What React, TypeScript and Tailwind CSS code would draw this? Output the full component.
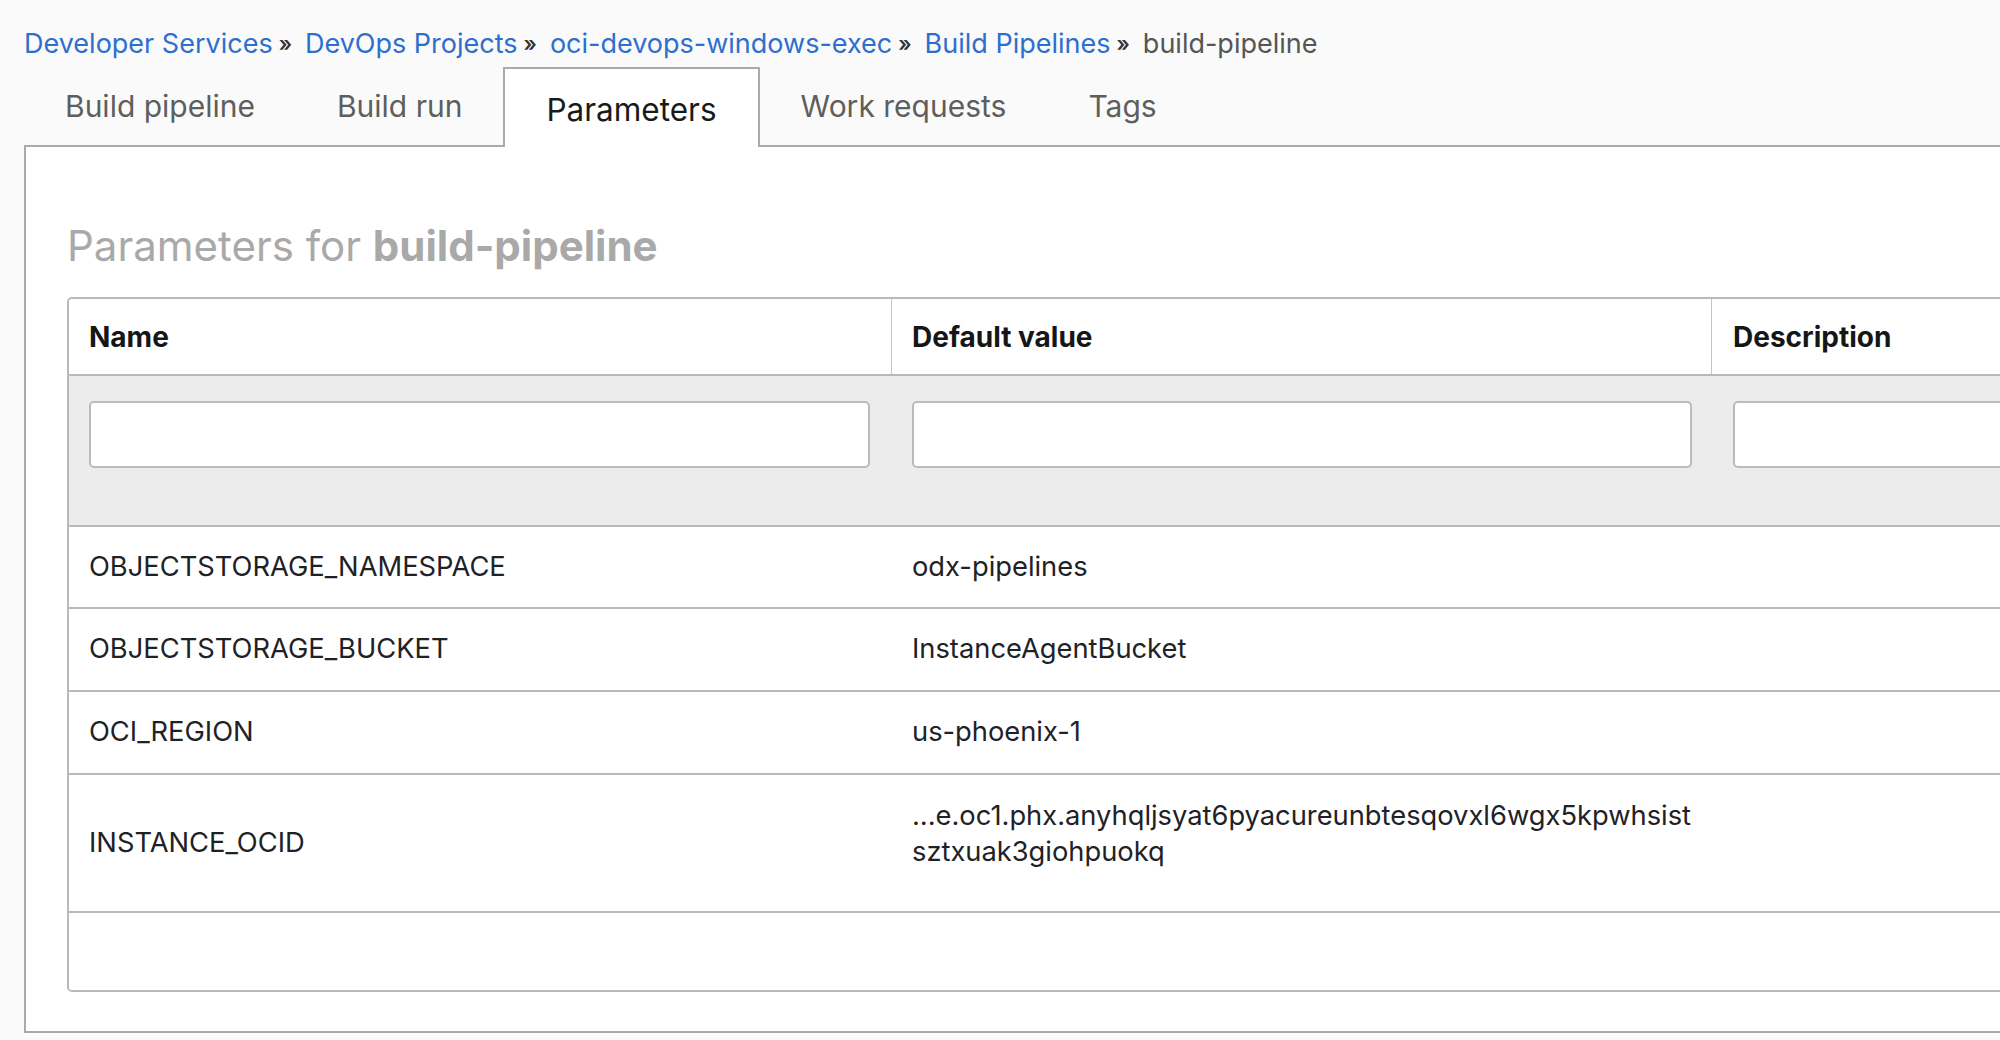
import React from "react";

const crumbs = [
  "Developer Services",
  "DevOps Projects",
  "oci-devops-windows-exec",
  "Build Pipelines",
];

const tabs = ["Build pipeline", "Build run", "Parameters", "Work requests", "Tags"];

const rows: { name: string; value: React.ReactNode; h: string }[] = [
  { name: "OBJECTSTORAGE_NAMESPACE", value: "odx-pipelines", h: "h-[82px]" },
  { name: "OBJECTSTORAGE_BUCKET", value: "InstanceAgentBucket", h: "h-[83px]" },
  { name: "OCI_REGION", value: "us-phoenix-1", h: "h-[83px]" },
  {
    name: "INSTANCE_OCID",
    value: (
      <div className="leading-[36px] -mt-[18px]">
        <div>...e.oc1.phx.anyhqljsyat6pyacureunbtesqovxl6wgx5kpwhsist</div>
        <div>sztxuak3giohpuokq</div>
      </div>
    ),
    h: "h-[138px]",
  },
];

export default function App() {
  return (
    <div
      className="w-[2000px] h-[1040px] overflow-hidden bg-[#fafafa]"
      style={{ fontFamily: "Inter, 'Noto Sans', Arial, sans-serif" }}
    >
      {/* Breadcrumb */}
      <div className="pt-[22px] h-[67px] pl-[24px] flex items-start text-[27px] leading-[44px] whitespace-nowrap">
        {crumbs.map((c) => (
          <React.Fragment key={c}>
            <span className="text-[#2d6fcd]">{c}</span>
            <span className="ml-[6px] mr-[13px] text-[#333] text-[21px] font-semibold">»</span>
          </React.Fragment>
        ))}
        <span className="text-[#555]">build-pipeline</span>
      </div>

      {/* Tabs */}
      <div className="ml-[24px] flex items-end h-[78px] relative z-10">
        {tabs.map((t) =>
          t === "Parameters" ? (
            <div
              key={t}
              className="h-[80px] -mb-[2px] px-[41px] pt-[3px] flex items-center bg-white border-t-2 border-l-2 border-r-2 border-[#aaaaaa] text-[31.5px] text-[#1a1a1a] whitespace-nowrap"
            >
              {t}
            </div>
          ) : (
            <div
              key={t}
              className="h-[78px] px-[41px] flex items-center text-[30px] text-[#5e5e5e] whitespace-nowrap"
            >
              {t}
            </div>
          )
        )}
      </div>

      {/* Panel */}
      <div className="ml-[24px] w-[2100px] h-[888px] bg-white border-t-2 border-l-2 border-b-2 border-[#aaaaaa] pl-[41px]">
        <div className="pt-[74px] h-[150px] text-[42px] leading-[50px] text-[#a9a9a9] whitespace-nowrap">
          Parameters for <span className="font-bold">build-pipeline</span>
        </div>

        <div className="w-[2100px] border-2 border-[#b6babe] rounded-[5px] overflow-hidden">
          {/* header */}
          <div className="flex h-[77px] border-b-2 border-[#b6babe] bg-white text-[28px] font-bold text-[#161616]">
            <div className="w-[823px] pl-[20px] flex items-center border-r border-[#c4c4c4]">Name</div>
            <div className="w-[820px] pl-[20px] flex items-center border-r border-[#c4c4c4]">Default value</div>
            <div className="flex-1 pl-[21px] flex items-center">Description</div>
          </div>
          {/* filter */}
          <div className="flex h-[151px] border-b-2 border-[#b6babe] bg-[#ececec] pt-[25px]">
            <div className="w-[823px] pl-[20px] pr-[22px]">
              <div className="h-[67px] bg-white border-2 border-[#b8bcc0] rounded-[5px]" />
            </div>
            <div className="w-[820px] pl-[20px] pr-[20px]">
              <div className="h-[67px] bg-white border-2 border-[#b8bcc0] rounded-[5px]" />
            </div>
            <div className="flex-1 pl-[21px] pr-[20px]">
              <div className="h-[67px] bg-white border-2 border-[#b8bcc0] rounded-[5px]" />
            </div>
          </div>
          {/* rows */}
          {rows.map((r) => (
            <div
              key={r.name}
              className={`flex ${r.h} border-b-2 border-[#b6babe] bg-white text-[27.3px] text-[#1e2226]`}
            >
              <div className="w-[823px] pl-[20px] flex items-center">{r.name}</div>
              <div className="w-[820px] pl-[20px] flex items-center whitespace-nowrap">{r.value}</div>
              <div className="flex-1" />
            </div>
          ))}
          <div className="h-[77px] bg-white" />
        </div>
      </div>
    </div>
  );
}
